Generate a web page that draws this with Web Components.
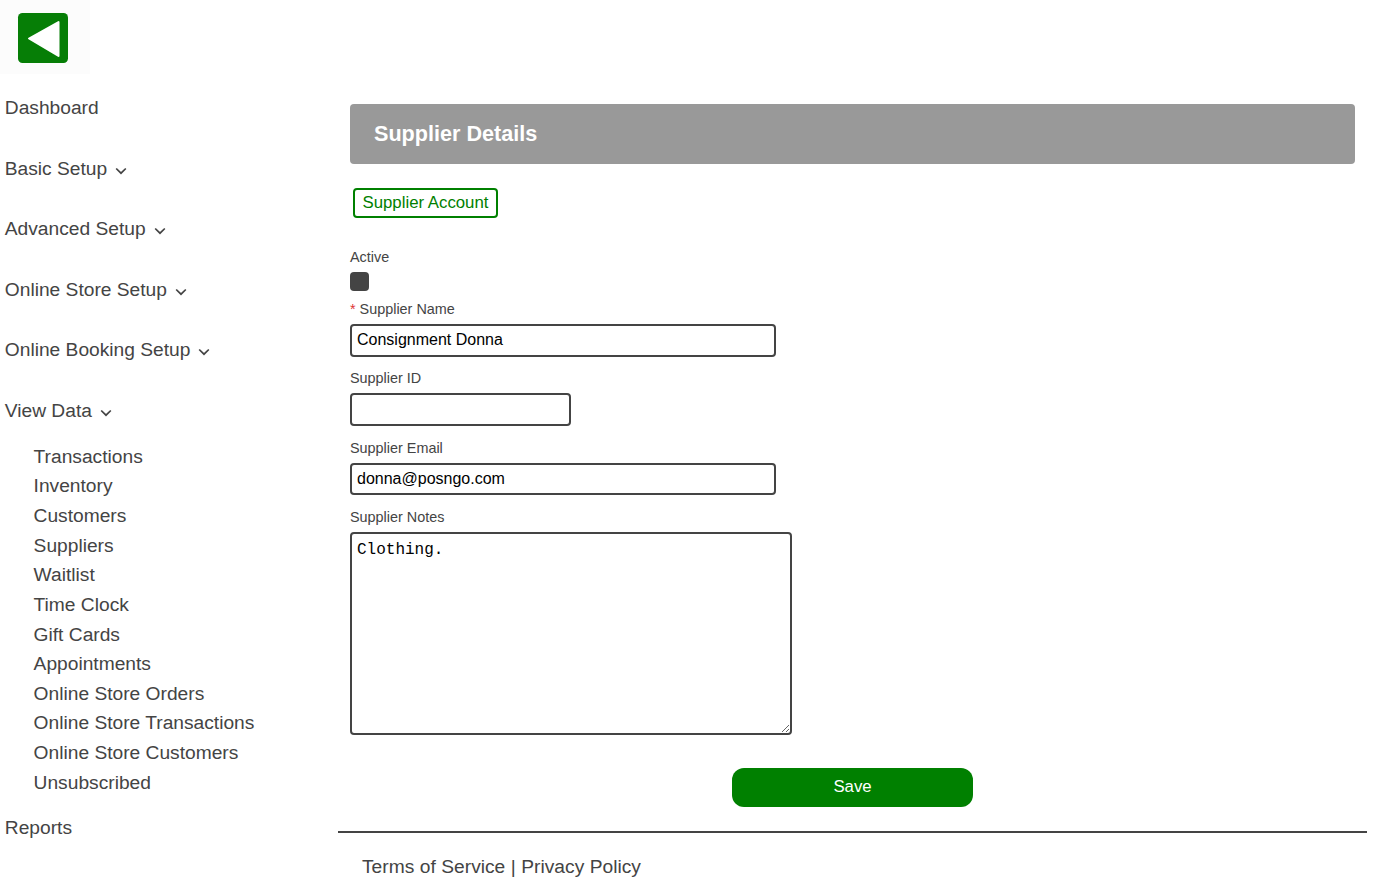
<!doctype html>
<html><head><meta charset="utf-8"><title>Supplier Details</title>
<style>
html,body{margin:0;padding:0;height:880px;overflow:hidden;background:#fff;font-family:"Liberation Sans",Arial,sans-serif;color:#444}
</style></head><body>
<template id="t-app"><style>
:host{display:grid;grid-template-columns:338px 1029px;width:1384px;height:880px}
</style><slot name="side"></slot><slot name="main"></slot></template>

<template id="t-side"><style>
:host{display:block;font-size:19.2px;line-height:28.8px;color:#444}
.logo{display:block;width:90px;height:74px;background:#fcfcfc}
ul{list-style:none;margin:0;padding:0}
.top{padding:20.3px 0 0 4.8px;display:flex;flex-direction:column;gap:31.75px}
.sub{padding:17px 0 0 28.8px;display:flex;flex-direction:column;gap:.84px;margin-bottom:-15px}
.chev{width:12px;height:8px;margin-left:2.6px;vertical-align:0}
</style>
<svg class="logo" viewBox="0 0 90 74" role="img" aria-label="Back"><rect x="18" y="13" width="50" height="50" rx="4.500" fill="#067e06"/><path d="M29 38.500 58.500 22V56Z" fill="#fff" stroke="#fff" stroke-width="2" stroke-linejoin="round"/></svg>
<ul class="top">
<li>Dashboard</li>
<li>Basic Setup <svg class="chev" viewBox="0 0 12 8"><path d="M1.200 1.500 6 6.200l4.800-4.700" fill="none" stroke="#444" stroke-width="1.700"/></svg></li>
<li>Advanced Setup <svg class="chev" viewBox="0 0 12 8"><path d="M1.200 1.500 6 6.200l4.800-4.700" fill="none" stroke="#444" stroke-width="1.700"/></svg></li>
<li>Online Store Setup <svg class="chev" viewBox="0 0 12 8"><path d="M1.200 1.500 6 6.200l4.800-4.700" fill="none" stroke="#444" stroke-width="1.700"/></svg></li>
<li>Online Booking Setup <svg class="chev" viewBox="0 0 12 8"><path d="M1.200 1.500 6 6.200l4.800-4.700" fill="none" stroke="#444" stroke-width="1.700"/></svg></li>
<li>View Data <svg class="chev" viewBox="0 0 12 8"><path d="M1.200 1.500 6 6.200l4.800-4.700" fill="none" stroke="#444" stroke-width="1.700"/></svg>
<ul class="sub"><li>Transactions</li><li>Inventory</li><li>Customers</li><li>Suppliers</li><li>Waitlist</li><li>Time Clock</li><li>Gift Cards</li><li>Appointments</li><li>Online Store Orders</li><li>Online Store Transactions</li><li>Online Store Customers</li><li>Unsubscribed</li></ul></li>
<li>Reports</li>
</ul></template>

<template id="t-main"><style>
:host{display:block;padding-top:104px}
.wrap{padding:0 12px}
h1{margin:0;height:60px;line-height:60px;padding:0 24px;background:#999;color:#fff;border-radius:4px;font-size:21.6px;font-weight:700}
.tabs{display:flex;padding:24px 0 0 3px;height:30px;margin-bottom:28px}
hr{margin:24px 0 0;border:0;border-top:2px solid #444}
footer{padding:20px 0 0 24px;font-size:19.2px;line-height:28.8px;word-spacing:.2px}
</style><div class="wrap"><h1>Supplier Details</h1><div class="tabs"><slot name="tab"></slot></div><slot></slot></div><hr><footer>Terms of Service | Privacy Policy</footer></template>

<template id="t-tab"><style>
:host{display:block;box-sizing:border-box;height:30px;padding:0 7.5px;border:2px solid green;border-radius:4px;color:green;font-size:16.8px;line-height:25px}
</style><slot></slot></template>

<template id="t-field"><style>
:host{display:block;font-size:14.4px;color:#444}
label{display:block;height:22px;line-height:22px;margin-bottom:4px}
</style><label><slot name="label"></slot></label><slot></slot></template>

<template id="t-form"><style>
:host{display:block}
.f{display:flex;flex-direction:column}
input[type=text],textarea{display:block;box-sizing:border-box;border:2px solid #444;border-radius:4px;background:#fff;color:#000;padding:0 5px;margin:0 0 10.53px;outline:0}
input[type=text]{height:32.8px;font:16px "Liberation Sans",Arial,sans-serif}
textarea{width:442px;height:203px;padding:6px 5px 5px;margin:0;font:16px/20px "Liberation Mono","Courier New",monospace}
.w{width:426px}.n{width:221px}
.box{display:block;appearance:none;-webkit-appearance:none;width:19px;height:19px;margin:0 0 7px;background:#444;border-radius:4px;border:0}
.save{display:block;box-sizing:border-box;width:241px;height:39px;margin:33px 0 0 382px;border:0;border-radius:12px;background:green;color:#fff;font:16.8px "Liberation Sans",Arial,sans-serif}
.star{color:#d33}
</style><div class="f">
<x-field><span slot="label">Active</span><input class="box" type="checkbox" checked aria-label="Active"></x-field>
<x-field><span slot="label"><span class="star">*</span> Supplier Name</span><input class="w" type="text" value="Consignment Donna" aria-label="Supplier Name"></x-field>
<x-field><span slot="label">Supplier ID</span><input class="n" type="text" aria-label="Supplier ID"></x-field>
<x-field><span slot="label">Supplier Email</span><input class="w" type="text" value="donna@posngo.com" aria-label="Supplier Email"></x-field>
<x-field><span slot="label">Supplier Notes</span><textarea aria-label="Supplier Notes">Clothing.</textarea></x-field>
<button class="save" type="button">Save</button></div></template>

<x-app>
<x-side slot="side"></x-side>
<x-main slot="main"><x-tab slot="tab">Supplier Account</x-tab><x-form></x-form></x-main>
</x-app>
<script>
for (const [name,id] of [['x-app','t-app'],['x-side','t-side'],['x-main','t-main'],['x-tab','t-tab'],['x-field','t-field'],['x-form','t-form']]) {
  customElements.define(name, class extends HTMLElement {
    constructor(){super();this.attachShadow({mode:'open'}).appendChild(document.getElementById(id).content.cloneNode(true));}
  });
}
</script>
</body></html>
